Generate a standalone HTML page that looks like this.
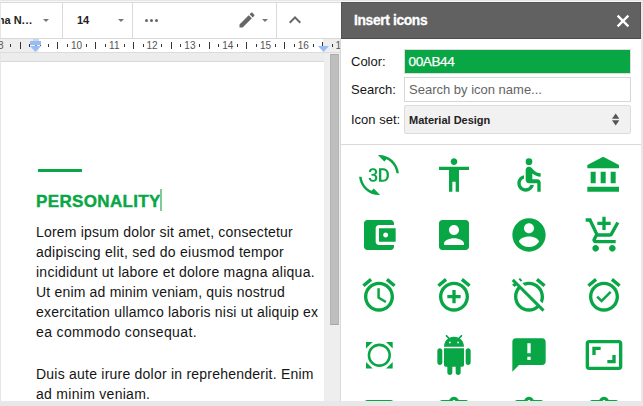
<!DOCTYPE html>
<html><head><meta charset="utf-8">
<style>
*{margin:0;padding:0;box-sizing:border-box}
html,body{width:643px;height:406px;overflow:hidden;background:#fff;font-family:"Liberation Sans",sans-serif}
.a{position:absolute}
#top0{left:0;top:0;width:643px;height:1px;background:#e6e6e6}
#top0b{left:0;top:1px;width:643px;height:1px;background:#f7f7f7}
#top1{left:0;top:2px;width:643px;height:1px;background:#dadada}
#tb{left:0;top:3px;width:341px;height:35px;background:#fff;overflow:hidden}
.sep{top:3px;width:1px;height:35px;background:#dadada}
.tbt{font-weight:bold;font-size:11px;color:#222;line-height:12px;white-space:nowrap}
.dd{width:0;height:0;border-left:3px solid transparent;border-right:3px solid transparent;border-top:3px solid #777}
#tbb{left:0;top:38px;width:341px;height:1px;background:#d9d9d9}
#ruler{left:0;top:39px;width:341px;height:13px;background:#eeeeee;overflow:hidden}
#rulerw{left:39px;top:0;width:284px;height:13px;background:#fff}
.tk{width:1px;background:#333}
.rn{font-size:10px;color:#555;line-height:11px;white-space:nowrap}
#rb{left:0;top:52px;width:341px;height:1px;background:#dcdcdc}
#band{left:0;top:53px;width:341px;height:8px;background:#ececec}
#pageb{left:1px;top:61px;width:323px;height:1px;background:#d9d9d9}
#page{left:1px;top:62px;width:323px;height:339px;background:#fff;overflow:hidden}
#leftl{left:0;top:53px;width:1px;height:348px;background:#e6e6e6}
#leftt{left:0;top:3px;width:1px;height:35px;background:#e6e6e6}
#track{left:324px;top:53px;width:16px;height:348px;background:#eeeeee}
#thumb{left:330px;top:54px;width:9px;height:271px;background:#bebebe;border:1px solid #b4b4b4;border-top-color:#a8a8a8;border-bottom-color:#a8a8a8}
#trackb{left:340px;top:53px;width:1px;height:348px;background:#d6d6d6}
.dl{font-size:14px;color:#151515;line-height:20px;white-space:nowrap}
#bottom{left:0;top:401px;width:643px;height:5px;background:#e8e8e8}
/* sidebar */
#sbl{left:340px;top:39px;width:1px;height:362px;background:#d9d9d9}
#sbr{left:641px;top:3px;width:2px;height:398px;background:#e8e8e8}
#hdr{left:341px;top:2px;width:300px;height:37px;background:#616161;border:1px solid #555;border-bottom-color:#4a4a4a;border-right-color:#555}
#hdrt{left:354px;top:13px;font-size:13.8px;letter-spacing:-0.35px;font-weight:bold;color:#fff;line-height:16px;-webkit-text-stroke:0.3px #fff}
.lbl{font-size:13px;color:#151515;line-height:15px;white-space:nowrap}
#color{left:404px;top:49px;width:227px;height:25px;background:#08a645;border:1px solid #e3dbdb}
#colort{left:408.6px;top:53.5px;font-size:13.6px;letter-spacing:-0.45px;color:#fff;line-height:15px;-webkit-text-stroke:0.25px #fff}
#search{left:404px;top:77px;width:227px;height:25px;background:#fff;border:1px solid #d6d6d6}
#searcht{left:409px;top:82px;font-size:13px;color:#646464;line-height:15px;white-space:nowrap}
#sel{left:404px;top:105px;width:227px;height:29px;background:#f1f1f1;border:1px solid #dcdcdc;border-radius:2px}
#selt{left:409px;top:114px;font-size:11px;font-weight:bold;color:#222;line-height:12px;white-space:nowrap}
#hsep{left:341px;top:144px;width:300px;height:1px;background:#d9d9d9}
#grid{left:341px;top:145px;width:300px;height:256px;overflow:hidden}
.ic{position:absolute;width:40px;height:40px;fill:#08a645}
</style></head><body>
<div class="a" id="top0"></div>
<div class="a" id="top0b"></div>
<div class="a" id="top1"></div>
<div class="a" id="tb">
  <div class="a tbt" style="left:-14.5px;top:11px">xima N<span style="letter-spacing:0.6px;margin-left:0.2px">...</span></div>
  <div class="a dd" style="left:42.5px;top:16px"></div>
  <div class="a sep" style="left:62px;top:0"></div>
  <div class="a tbt" style="left:77px;top:11px">14</div>
  <div class="a dd" style="left:117.5px;top:16px"></div>
  <div class="a sep" style="left:132px;top:0"></div>
  <div class="a" style="left:144.5px;top:16px;width:3.2px;height:3.2px;background:#666;border-radius:50%"></div>
  <div class="a" style="left:149.5px;top:16px;width:3.2px;height:3.2px;background:#666;border-radius:50%"></div>
  <div class="a" style="left:154.5px;top:16px;width:3.2px;height:3.2px;background:#666;border-radius:50%"></div>
  <svg class="a" style="left:236.5px;top:6.7px" width="20" height="20" viewBox="0 0 24 24"><path fill="#666" d="M3 17.25V21h3.75L17.81 9.94l-3.75-3.75L3 17.25zM20.71 7.04c.39-.39.39-1.02 0-1.41l-2.34-2.34c-.39-.39-1.02-.39-1.41 0l-1.83 1.83 3.75 3.75 1.83-1.83z"/></svg>
  <div class="a dd" style="left:261.5px;top:16px"></div>
  <div class="a sep" style="left:276px;top:0"></div>
  <svg class="a" style="left:283px;top:5px" width="24" height="24" viewBox="0 0 24 24"><path fill="#666" d="M12 8l-6 6 1.41 1.41L12 10.83l4.59 4.58L18 14z"/></svg>
</div>
<div class="a" id="tbb"></div>
<div class="a" id="ruler"><div class="a" id="rulerw"></div><div id="rk"><div class="a rn" style="left:-4.8px;top:0.6px;width:11.2px;text-align:center">8</div><div class="a tk" style="left:10px;top:5px;height:3px"></div><div class="a tk" style="left:20px;top:3px;height:7px"></div><div class="a tk" style="left:29px;top:5px;height:3px"></div><div class="a tk" style="left:48px;top:5px;height:3px"></div><div class="a tk" style="left:57px;top:3px;height:7px"></div><div class="a tk" style="left:67px;top:5px;height:3px"></div><div class="a rn" style="left:70.9px;top:0.6px;width:11.2px;text-align:center">10</div><div class="a tk" style="left:86px;top:5px;height:3px"></div><div class="a tk" style="left:95px;top:3px;height:7px"></div><div class="a tk" style="left:105px;top:5px;height:3px"></div><div class="a rn" style="left:108.7px;top:0.6px;width:11.2px;text-align:center">11</div><div class="a tk" style="left:124px;top:5px;height:3px"></div><div class="a tk" style="left:133px;top:3px;height:7px"></div><div class="a tk" style="left:143px;top:5px;height:3px"></div><div class="a rn" style="left:146.5px;top:0.6px;width:11.2px;text-align:center">12</div><div class="a tk" style="left:161px;top:5px;height:3px"></div><div class="a tk" style="left:171px;top:3px;height:7px"></div><div class="a tk" style="left:180px;top:5px;height:3px"></div><div class="a rn" style="left:184.3px;top:0.6px;width:11.2px;text-align:center">13</div><div class="a tk" style="left:199px;top:5px;height:3px"></div><div class="a tk" style="left:209px;top:3px;height:7px"></div><div class="a tk" style="left:218px;top:5px;height:3px"></div><div class="a rn" style="left:222.1px;top:0.6px;width:11.2px;text-align:center">14</div><div class="a tk" style="left:237px;top:5px;height:3px"></div><div class="a tk" style="left:246px;top:3px;height:7px"></div><div class="a tk" style="left:256px;top:5px;height:3px"></div><div class="a rn" style="left:259.9px;top:0.6px;width:11.2px;text-align:center">15</div><div class="a tk" style="left:275px;top:5px;height:3px"></div><div class="a tk" style="left:284px;top:3px;height:7px"></div><div class="a tk" style="left:294px;top:5px;height:3px"></div><div class="a rn" style="left:297.7px;top:0.6px;width:11.2px;text-align:center">16</div><div class="a tk" style="left:313px;top:5px;height:3px"></div><div class="a tk" style="left:322px;top:3px;height:7px"></div><div class="a tk" style="left:332px;top:5px;height:3px"></div><div class="a rn" style="left:335.5px;top:0.6px;width:11.2px;text-align:center">17</div><div class="a" style="left:33px;top:0px;width:6px;height:2px;background:#c9d6ea"></div><div class="a" style="left:30px;top:2px;width:11px;height:4px;background:#98bdf6"></div><svg class="a" style="left:30px;top:7px" width="11" height="6" viewBox="0 0 11 6"><path fill="#98bdf6" d="M0 0H11L5.5 6z"/></svg><div class="a" style="left:30px;top:6px;width:11px;height:1px;background:#f4f1ec"></div><div class="a" style="left:35px;top:6px;width:2px;height:1px;background:#999"></div><div class="a" style="left:40px;top:6px;width:1px;height:1px;background:#7a5a2a"></div><svg class="a" style="left:318px;top:7px" width="11" height="6" viewBox="0 0 11 6"><path fill="#98bdf6" d="M0 0H11L5.5 6z"/></svg></div></div>
<div class="a" id="rb"></div>
<div class="a" id="band"></div>
<div class="a" id="leftl"></div>
<div class="a" id="leftt"></div>
<div class="a" id="pageb"></div>
<div class="a" id="page">
  <div class="a" style="left:37px;top:107px;width:44px;height:3px;background:#08a645"></div>
  <div class="a" style="left:35px;top:129.5px;font-size:17px;font-weight:bold;color:#08a645;line-height:20px;white-space:nowrap;letter-spacing:0.35px;-webkit-text-stroke:0.4px #08a645">PERSONALITY</div>
  <div class="a" style="left:159px;top:127px;width:1.6px;height:22px;background:#7fcb98"></div>
  <div class="a dl" style="left:35px;top:160.4px;letter-spacing:0.204px">Lorem ipsum dolor sit amet, consectetur</div>
  <div class="a dl" style="left:35px;top:180.4px;letter-spacing:0.26px">adipiscing elit, sed do eiusmod tempor</div>
  <div class="a dl" style="left:35px;top:200.4px;letter-spacing:0.252px">incididunt ut labore et dolore magna aliqua.</div>
  <div class="a dl" style="left:35px;top:220.4px;letter-spacing:0.186px">Ut enim ad minim veniam, quis nostrud</div>
  <div class="a dl" style="left:35px;top:240.4px;letter-spacing:0.21px">exercitation ullamco laboris nisi ut aliquip ex</div>
  <div class="a dl" style="left:35px;top:260.4px;letter-spacing:0.36px">ea commodo consequat.</div>
  <div class="a dl" style="left:35px;top:302.4px;letter-spacing:0.228px">Duis aute irure dolor in reprehenderit. Enim</div>
  <div class="a dl" style="left:35px;top:322.4px;letter-spacing:0.287px">ad minim veniam.</div>
</div>
<div class="a" id="track"></div>
<div class="a" id="thumb"></div>
<div class="a" id="trackb"></div>
<div class="a" id="bottom"></div>

<div class="a" id="sbl"></div>
<div class="a" id="sbr"></div>
<div class="a" id="hdr"></div>
<div class="a" id="hdrt">Insert icons</div>
<svg class="a" style="left:615px;top:13px" width="16" height="16" viewBox="0 0 16 16"><path d="M2.6 2.6L13.4 13.4M13.4 2.6L2.6 13.4" stroke="#fff" stroke-width="2.3"/></svg>
<div class="a lbl" style="left:351px;top:54px">Color:</div>
<div class="a lbl" style="left:351px;top:82px">Search:</div>
<div class="a lbl" style="left:351px;top:112px">Icon set:</div>
<div class="a" id="color"></div>
<div class="a" id="colort">00AB44</div>
<div class="a" id="search"></div>
<div class="a" id="searcht">Search by icon name...</div>
<div class="a" id="sel"></div>
<div class="a" id="selt">Material Design</div>
<svg class="a" style="left:611.9px;top:113px" width="7.4" height="13" viewBox="0 0 7.4 13"><path fill="#555" d="M3.7 0.6L7.4 5.8H0zM3.7 12.5L7.4 7.3H0z"/></svg>
<div class="a" id="hsep"></div>
<div class="a" id="grid"><svg class="ic" style="left:17.6px;top:10.0px" viewBox="0 0 24 24"><path d="M7.52 21.48C4.25 19.94 1.91 16.76 1.55 13H.05C.56 19.16 5.71 24 12 24l.66-.03-3.81-3.81-1.33 1.32zm.89-6.52c-.19 0-.37-.03-.52-.08-.16-.06-.29-.13-.4-.24-.11-.1-.2-.22-.26-.37-.06-.14-.09-.3-.09-.47h-1.3c0 .36.07.68.21.95.14.27.33.5.56.69.24.18.51.32.82.41.3.1.62.15.96.15.37 0 .72-.05 1.03-.15.32-.1.6-.25.83-.44s.42-.43.55-.72c.13-.29.2-.61.2-.97 0-.19-.02-.38-.07-.56-.05-.18-.12-.35-.23-.51-.1-.16-.24-.3-.4-.43-.17-.13-.37-.23-.61-.31.2-.09.37-.2.52-.33.15-.13.27-.27.37-.42.1-.15.17-.3.22-.46.05-.16.07-.32.07-.48 0-.36-.06-.68-.18-.96-.12-.28-.29-.51-.51-.69-.2-.19-.47-.33-.77-.43C9.1 8.05 8.76 8 8.39 8c-.36 0-.69.05-1 .16-.3.11-.57.26-.79.45-.21.19-.38.41-.51.67-.12.26-.18.54-.18.85h1.3c0-.17.03-.32.09-.45s.14-.25.25-.34c.11-.09.23-.17.38-.22.15-.05.3-.08.48-.08.4 0 .7.1.89.31.19.2.29.49.29.86 0 .18-.03.34-.08.49-.05.15-.14.27-.25.37-.11.1-.25.18-.41.24-.16.06-.36.09-.58.09H7.5v1.03h.77c.22 0 .42.02.6.07s.33.13.45.23c.12.11.22.24.29.4.07.16.1.35.1.57 0 .41-.12.72-.35.93-.23.23-.55.33-.95.33zm8.55-5.92c-.32-.33-.7-.59-1.14-.77-.43-.18-.92-.27-1.46-.27H12v8h2.3c.55 0 1.06-.09 1.51-.27.45-.18.84-.43 1.16-.76.32-.33.57-.73.74-1.19.17-.47.26-.99.26-1.57v-.4c0-.58-.09-1.1-.26-1.57-.18-.47-.43-.87-.75-1.2zm-.39 3.16c0 .42-.05.79-.14 1.13-.1.33-.24.62-.43.85-.19.23-.43.41-.71.53-.29.12-.62.18-.99.18h-.91V9.12h.97c.72 0 1.27.23 1.64.69.38.46.57 1.12.57 1.99v.4zM12 0l-.66.03 3.81 3.81 1.33-1.33c3.27 1.55 5.61 4.72 5.96 8.48h1.5C23.44 4.84 18.29 0 12 0z"/></svg><svg class="ic" style="left:92.6px;top:10.0px" viewBox="0 0 24 24"><path d="M12 2c1.1 0 2 .9 2 2s-.9 2-2 2-2-.9-2-2 .9-2 2-2zm9 7h-6v13h-2v-6h-2v6H9V9H3V7h18v2z"/></svg><svg class="ic" style="left:167.6px;top:10.0px" viewBox="0 0 24 24"><path d="M12 4m-2 0a2 2 0 1 0 4 0a2 2 0 1 0 -4 0M19 13v-2c-1.54.02-3.09-.75-4.07-1.83l-1.29-1.43c-.17-.19-.38-.34-.61-.45-.01 0-.01-.01-.02-.01H13c-.35-.2-.75-.3-1.19-.26C10.76 7.11 10 8.04 10 9.09V15c0 1.1.9 2 2 2h5v5h2v-5.5c0-1.1-.9-2-2-2h-3v-3.45c1.29 1.07 3.25 1.94 5 1.95zm-6.17 5c-.41 1.16-1.52 2-2.83 2-1.66 0-3-1.34-3-3 0-1.31.84-2.41 2-2.83V12.1c-2.28.46-4 2.48-4 4.9 0 2.76 2.24 5 5 5 2.42 0 4.44-1.72 4.9-4h-2.07z"/></svg><svg class="ic" style="left:242.6px;top:10.0px" viewBox="0 0 24 24"><path d="M4 10v7h3v-7H4zm6 0v7h3v-7h-3zM2 22h19v-3H2v3zm14-12v7h3v-7h-3zm-4.5-9L2 6v2h19V6l-9.5-5z"/></svg><svg class="ic" style="left:17.6px;top:70.0px" viewBox="0 0 24 24"><path d="M21 18v1c0 1.1-.9 2-2 2H5c-1.11 0-2-.9-2-2V5c0-1.1.89-2 2-2h14c1.1 0 2 .9 2 2v1h-9c-1.11 0-2 .9-2 2v8c0 1.1.89 2 2 2h9zm-9-2h10V8H12v8zm4-2.5c-.83 0-1.5-.67-1.5-1.5s.67-1.5 1.5-1.5 1.5.67 1.5 1.5-.67 1.5-1.5 1.5z"/></svg><svg class="ic" style="left:92.6px;top:70.0px" viewBox="0 0 24 24"><path d="M3 5v14c0 1.1.89 2 2 2h14c1.1 0 2-.9 2-2V5c0-1.1-.9-2-2-2H5c-1.11 0-2 .9-2 2zm12 4c0 1.66-1.34 3-3 3s-3-1.34-3-3 1.34-3 3-3 3 1.34 3 3zm-9 8c0-2 4-3.1 6-3.1s6 1.1 6 3.1v1H6v-1z"/></svg><svg class="ic" style="left:167.6px;top:70.0px" viewBox="0 0 24 24"><path d="M12 2C6.48 2 2 6.48 2 12s4.48 10 10 10 10-4.48 10-10S17.52 2 12 2zm0 3c1.66 0 3 1.34 3 3s-1.34 3-3 3-3-1.34-3-3 1.34-3 3-3zm0 14.2c-2.5 0-4.71-1.28-6-3.22.03-1.99 4-3.08 6-3.08 1.99 0 5.97 1.09 6 3.08-1.29 1.94-3.5 3.22-6 3.22z"/></svg><svg class="ic" style="left:242.6px;top:70.0px" viewBox="0 0 24 24"><path d="M11 9h2V6h3V4h-3V1h-2v3H8v2h3v3zm-4 9c-1.1 0-1.99.9-1.99 2S5.9 22 7 22s2-.9 2-2-.9-2-2-2zm10 0c-1.1 0-1.99.9-1.99 2s.89 2 1.99 2 2-.9 2-2-.9-2-2-2zm-9.83-3.25l.03-.12.9-1.63h7.45c.75 0 1.41-.41 1.75-1.03l3.86-7.01L19.42 4h-.01l-1.1 2-2.76 5H8.53l-.13-.27L6.16 6l-.95-2-.94-2H1v2h2l3.6 7.59-1.35 2.45c-.16.28-.25.61-.25.96 0 1.1.9 2 2 2h12v-2H7.42c-.13 0-.25-.11-.25-.25z"/></svg><svg class="ic" style="left:17.6px;top:130.0px" viewBox="0 0 24 24"><path d="M22 5.72l-4.6-3.86-1.29 1.53 4.6 3.86L22 5.72zM7.88 3.39L6.6 1.86 2 5.71l1.29 1.53 4.59-3.85zM12.5 8H11v6l4.75 2.85.75-1.23-4-2.37V8zM12 4c-4.97 0-9 4.03-9 9s4.02 9 9 9c4.97 0 9-4.03 9-9s-4.03-9-9-9zm0 16c-3.87 0-7-3.13-7-7s3.13-7 7-7 7 3.13 7 7-3.13 7-7 7z"/></svg><svg class="ic" style="left:92.6px;top:130.0px" viewBox="0 0 24 24"><path d="M7.88 3.39L6.6 1.86 2 5.71l1.29 1.53 4.59-3.85zM22 5.72l-4.6-3.86-1.29 1.53 4.6 3.86L22 5.72zM12 4c-4.97 0-9 4.03-9 9s4.02 9 9 9c4.97 0 9-4.03 9-9s-4.03-9-9-9zm0 16c-3.87 0-7-3.13-7-7s3.13-7 7-7 7 3.13 7 7-3.13 7-7 7zm1-11h-2v3H8v2h3v3h2v-3h3v-2h-3V9z"/></svg><svg class="ic" style="left:167.6px;top:130.0px" viewBox="0 0 24 24"><path d="M12 6c3.87 0 7 3.13 7 7 0 .84-.16 1.65-.43 2.4l1.52 1.52c.58-1.19.91-2.51.91-3.92 0-4.97-4.03-9-9-9-1.41 0-2.73.33-3.92.91L9.6 6.43C10.35 6.16 11.16 6 12 6zm10-.28l-4.6-3.86-1.29 1.53 4.6 3.86L22 5.72zM2.92 2.29L1.65 3.57 2.98 4.9l-1.11.93 1.42 1.42 1.11-.94.8.8C3.83 8.69 3 10.75 3 13c0 4.97 4.02 9 9 9 2.25 0 4.31-.83 5.89-2.2l2.2 2.2 1.27-1.27L3.89 3.27l-.97-.98zm13.55 16.1C15.26 19.39 13.7 20 12 20c-3.87 0-7-3.13-7-7 0-1.7.61-3.26 1.61-4.47l9.86 9.86zM8.02 3.28L6.6 1.86l-.86.71 1.42 1.42.86-.71z"/></svg><svg class="ic" style="left:242.6px;top:130.0px" viewBox="0 0 24 24"><path d="M22 5.72l-4.6-3.86-1.29 1.53 4.6 3.86L22 5.72zM7.88 3.39L6.6 1.86 2 5.71l1.29 1.53 4.59-3.85zM12 4c-4.97 0-9 4.03-9 9s4.02 9 9 9c4.97 0 9-4.03 9-9s-4.03-9-9-9zm0 16c-3.87 0-7-3.13-7-7s3.13-7 7-7 7 3.13 7 7-3.13 7-7 7zm-1.46-5.47L8.41 12.4l-1.06 1.06 3.18 3.18 6-6-1.06-1.06-4.93 4.95z"/></svg><svg class="ic" style="left:17.6px;top:190.0px" viewBox="0 0 24 24"><path d="M16.21 4.16l4 4v-4zm4 12l-4 4h4zm-12 4l-4-4v4zm-4-12l4-4h-4zm12.95-.95c-2.73-2.73-7.17-2.73-9.9 0s-2.73 7.17 0 9.9 7.17 2.73 9.9 0 2.73-7.16 0-9.9zm-1.1 8.8c-2.13 2.13-5.57 2.13-7.7 0s-2.13-5.57 0-7.7 5.57-2.13 7.7 0 2.13 5.57 0 7.7z"/></svg><svg class="ic" style="left:92.6px;top:190.0px" viewBox="0 0 24 24"><path d="M6 18c0 .55.45 1 1 1h1v3.5c0 .83.67 1.5 1.5 1.5s1.5-.67 1.5-1.5V19h2v3.5c0 .83.67 1.5 1.5 1.5s1.5-.67 1.5-1.5V19h1c.55 0 1-.45 1-1V8H6v10zM3.5 8C2.67 8 2 8.67 2 9.5v7c0 .83.67 1.5 1.5 1.5S5 17.33 5 16.5v-7C5 8.67 4.33 8 3.5 8zm17 0c-.83 0-1.5.67-1.5 1.5v7c0 .83.67 1.5 1.5 1.5s1.5-.67 1.5-1.5v-7c0-.83-.67-1.5-1.5-1.5zm-4.97-5.84l1.3-1.3c.2-.2.2-.51 0-.71-.2-.2-.51-.2-.71 0l-1.48 1.48C13.85 1.23 12.95 1 12 1c-.96 0-1.86.23-2.66.63L7.85.15c-.2-.2-.51-.2-.71 0-.2.2-.2.51 0 .71l1.31 1.31C6.97 3.26 6 5.01 6 7h12c0-1.99-.97-3.75-2.47-4.84zM10 5H9V4h1v1zm5 0h-1V4h1v1z"/></svg><svg class="ic" style="left:167.6px;top:190.0px" viewBox="0 0 24 24"><path d="M20 2H4c-1.1 0-1.99.9-1.99 2L2 22l4-4h14c1.1 0 2-.9 2-2V4c0-1.1-.9-2-2-2zm-7 9h-2V5h2v6zm0 4h-2v-2h2v2z"/></svg><svg class="ic" style="left:242.6px;top:190.0px" viewBox="0 0 24 24"><path d="M19 12h-2v3h-3v2h5v-5zM7 9h3V7H5v5h2V9zm14-6H3c-1.1 0-2 .9-2 2v14c0 1.1.9 2 2 2h18c1.1 0 2-.9 2-2V5c0-1.1-.9-2-2-2zm0 16.01H3V4.99h18v14.02z"/></svg><svg class="ic" style="left:17.6px;top:250.0px" viewBox="0 0 24 24"><path d="M19 3H5c-1.1 0-2 .9-2 2v14c0 1.1.9 2 2 2h14c1.1 0 2-.9 2-2V5c0-1.1-.9-2-2-2zM9 17H7v-7h2v7zm4 0h-2V7h2v10zm4 0h-2v-4h2v4z"/></svg><svg class="ic" style="left:92.6px;top:250.0px" viewBox="0 0 24 24"><path d="M19 3h-4.18C14.4 1.84 13.3 1 12 1c-1.3 0-2.4.84-2.82 2H5c-1.1 0-2 .9-2 2v14c0 1.1.9 2 2 2h14c1.1 0 2-.9 2-2V5c0-1.1-.9-2-2-2zm-7 0c.55 0 1 .45 1 1s-.45 1-1 1-1-.45-1-1 .45-1 1-1zm-2 14H7v-2h7v2zm3-4H7v-2h10v2zm0-4H7V7h10v2z"/></svg><svg class="ic" style="left:167.6px;top:250.0px" viewBox="0 0 24 24"><path d="M19 3h-4.18C14.4 1.84 13.3 1 12 1c-1.3 0-2.4.84-2.82 2H5c-1.1 0-2 .9-2 2v14c0 1.1.9 2 2 2h14c1.1 0 2-.9 2-2V5c0-1.1-.9-2-2-2zm-7 0c.55 0 1 .45 1 1s-.45 1-1 1-1-.45-1-1 .45-1 1-1zm0 4c1.66 0 3 1.34 3 3s-1.34 3-3 3-3-1.34-3-3 1.34-3 3-3zm6 12H6v-1.4c0-2 4-3.1 6-3.1s6 1.1 6 3.1V19z"/></svg><svg class="ic" style="left:242.6px;top:250.0px" viewBox="0 0 24 24"><path d="M19 3h-4.18C14.4 1.84 13.3 1 12 1c-1.3 0-2.4.84-2.82 2H5c-1.1 0-2 .9-2 2v14c0 1.1.9 2 2 2h14c1.1 0 2-.9 2-2V5c0-1.1-.9-2-2-2zm-6 15h-2v-2h2v2zm0-4h-2V8h2v6zm-1-9c-.55 0-1-.45-1-1s.45-1 1-1 1 .45 1 1-.45 1-1 1z"/></svg></div>
</body></html>
